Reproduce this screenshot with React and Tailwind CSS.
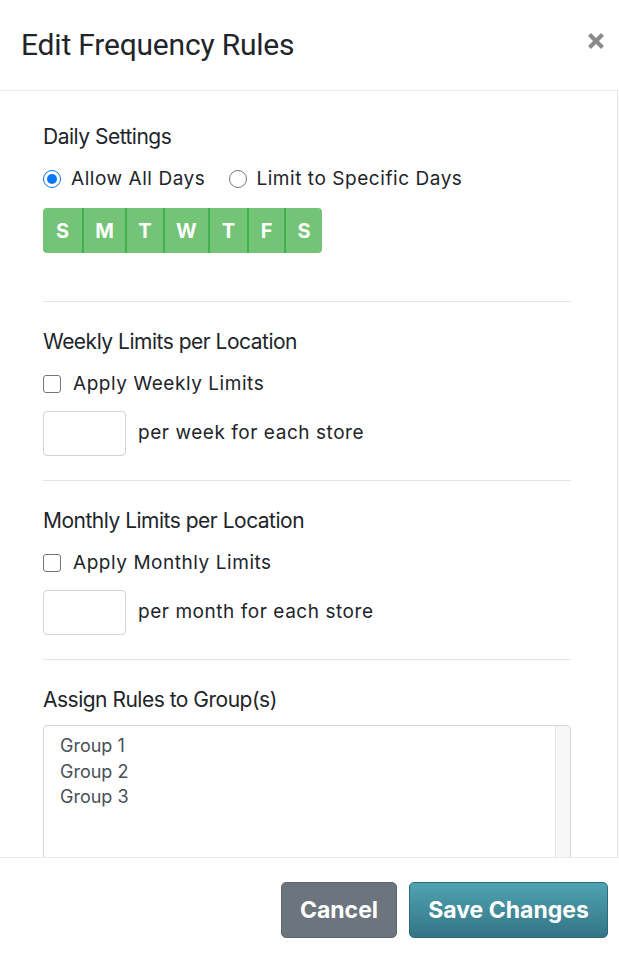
function Radio({ checked }) {
  return checked ? (
    <span className="w-[18px] h-[18px] rounded-full border-[1.5px] border-[#0b76f6] flex items-center justify-center shrink-0 bg-white">
      <span className="w-[10px] h-[10px] rounded-full bg-[#0b76f6]"></span>
    </span>
  ) : (
    <span className="block w-[18px] h-[18px] rounded-full border-[1.5px] border-[#767676] shrink-0 bg-white"></span>
  );
}

function Checkbox() {
  return <span className="block w-[18px] h-[18px] rounded-[3px] border-[1.5px] border-[#767676] shrink-0 bg-white"></span>;
}

function SectionTitle({ children }) {
  return <div className="text-[21px] leading-[26px] tracking-[-0.5px] text-[#212529]">{children}</div>;
}

function LimitSection({ title, check, unit }) {
  return (
    <div>
      <SectionTitle>{title}</SectionTitle>
      <div className="flex items-center gap-[12px] mt-[18px] h-[22px]">
        <Checkbox />
        <span className="text-[19px] tracking-[0.55px]">{check}</span>
      </div>
      <div className="flex items-center gap-[12px] mt-[16px]">
        <div className="w-[83px] h-[45px] border border-[#ced4da] rounded-[4px] bg-white"></div>
        <span className="text-[19px] tracking-[0.55px]">{unit}</span>
      </div>
    </div>
  );
}

export default function App() {
  const days = [
    ["S", "w-[39px]"],
    ["M", "w-[43px]"],
    ["T", "w-[38px]"],
    ["W", "w-[45px]"],
    ["T", "w-[39px]"],
    ["F", "w-[37px]"],
    ["S", "w-[38px]"],
  ];
  const font = { fontFamily: "Inter, 'Liberation Sans', sans-serif" };
  return (
    <div className="w-[619px] h-[959px] bg-white flex flex-col overflow-hidden text-[#212529]" style={font}>
      {/* Header */}
      <div className="h-[91px] shrink-0 border-b border-[#e9ecef] flex items-center justify-between pl-[21px] pr-[14px]">
        <h5 className="text-[30px] leading-none font-normal tracking-[-0.2px] font-['Roboto',sans-serif] -mt-[1px]">Edit Frequency Rules</h5>
        <svg width="18" height="18" viewBox="0 0 18 18" className="-mt-[8px]">
          <path d="M2.5 2.5 L15.5 15.5 M15.5 2.5 L2.5 15.5" stroke="#8a8a8a" strokeWidth="4.2" strokeLinecap="butt" />
        </svg>
      </div>

      {/* Body */}
      <div className="flex-1 min-h-0 overflow-hidden border-r border-[#e4e4e4] mr-[1px]">
        <div className="pl-[43px] pr-[46px] pt-[33px]">
          {/* Daily settings */}
          <SectionTitle>Daily Settings</SectionTitle>
          <div className="flex items-center mt-[18px] h-[22px] text-[19px] tracking-[0.55px]">
            <Radio checked />
            <span className="ml-[10px]">Allow All Days</span>
            <span className="ml-[24px]"><Radio /></span>
            <span className="ml-[9px]">Limit to Specific Days</span>
          </div>
          <div className="flex mt-[18px] w-fit rounded-[4px] overflow-hidden">
            {days.map(([d, w], i) => (
              <div
                key={i}
                className={`h-[45px] flex items-center justify-center bg-[#73c476] text-white font-bold text-[20px] ${w} ${
                  i > 0 ? "border-l-2 border-[#40b14b]" : ""
                }`}
              >
                {d}
              </div>
            ))}
          </div>

          <div className="h-px bg-[#e5e5e5] mt-[48px] mb-[27px]"></div>

          <LimitSection title="Weekly Limits per Location" check="Apply Weekly Limits" unit="per week for each store" />

          <div className="h-px bg-[#e5e5e5] mt-[24px] mb-[27px]"></div>

          <LimitSection title="Monthly Limits per Location" check="Apply Monthly Limits" unit="per month for each store" />

          <div className="h-px bg-[#e5e5e5] mt-[24px] mb-[27px]"></div>

          <SectionTitle>Assign Rules to Group(s)</SectionTitle>
          <div className="mt-[12px] h-[160px] border border-[#ced4da] rounded-[4px] flex overflow-hidden">
            <div className="flex-1 pl-[16px] pt-[7px] text-[18px] leading-[25.5px] text-[#495057]">
              <div>Group 1</div>
              <div>Group 2</div>
              <div>Group 3</div>
            </div>
            <div className="w-[15px] bg-[#f7f7f7] border-l border-[#e6e6e6]"></div>
          </div>
        </div>
      </div>

      {/* Footer */}
      <div className="h-[102px] shrink-0 border-t border-[#e9ecef] flex items-start justify-end gap-[12px] pr-[11px] pt-[24px]">
        <button className="w-[116px] h-[56px] rounded-[5px] bg-[#6c757d] border border-[#5f676e] text-white font-bold text-[23px]">Cancel</button>
        <button className="w-[199px] h-[56px] rounded-[5px] bg-gradient-to-b from-[#50a3b3] to-[#347584] border border-[#2c6a80] text-white font-bold text-[23px]">Save Changes</button>
      </div>
    </div>
  );
}
